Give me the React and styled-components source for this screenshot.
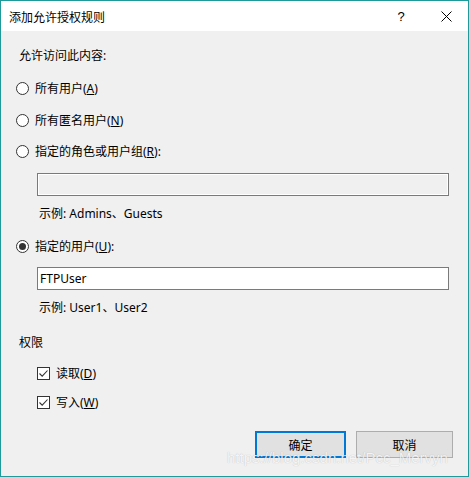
import React from "react";
import styled, { createGlobalStyle } from "styled-components";

const GlobalStyle = createGlobalStyle`
  html, body {
    margin: 0;
    padding: 0;
    background: #f0f0f0;
  }
  body {
    font-family: "Noto Sans", "Noto Sans CJK SC", sans-serif;
    font-size: 12px;
    color: #000;
  }
`;

const Window = styled.div`
  position: relative;
  width: 469px;
  height: 477px;
  box-sizing: border-box;
  border: 1px solid #1f9a9a;
  background: #f0f0f0;
  display: flex;
  flex-direction: column;
  overflow: hidden;
`;

const TitleBar = styled.div`
  height: 30px;
  background: #fff;
  display: flex;
  align-items: center;
  padding-left: 8px;
  padding-right: 16px;
`;

const Title = styled.div`
  flex: 1;
  font-family: "Noto Sans CJK SC", sans-serif;
  font-size: 12px;
  color: #000;
`;

const Help = styled.div`
  width: 12px;
  margin-right: 34px;
  font-family: "Liberation Sans", sans-serif;
  font-size: 13px;
  text-align: center;
`;

const Body = styled.div`
  flex: 1;
  display: flex;
  flex-direction: column;
  padding-left: 15px;
  padding-right: 19px;
`;

const Row = styled.div`
  height: 20px;
  display: flex;
  align-items: center;
  margin-top: ${p => p.$top || 0}px;
  margin-left: ${p => p.$left || 0}px;
  white-space: nowrap;
`;

const Radio = styled.span`
  width: 13px;
  height: 13px;
  box-sizing: border-box;
  border: 1px solid #333;
  border-radius: 50%;
  background: #fff;
  margin-right: 6px;
  display: flex;
  align-items: center;
  justify-content: center;

  &:after {
    content: "";
    width: 7px;
    height: 7px;
    border-radius: 50%;
    background: ${p => (p.$checked ? "#333" : "transparent")};
  }
`;

const Check = styled.span`
  width: 13px;
  height: 13px;
  box-sizing: border-box;
  border: 1px solid #333;
  background: #fff;
  margin-right: 6px;
  display: flex;
  align-items: center;
  justify-content: center;
`;

const Field = styled.div`
  height: 23px;
  margin-left: 21px;
  margin-top: ${p => p.$top}px;
  box-sizing: border-box;
  border: 1px solid #7a7a7a;
  background: ${p => (p.$disabled ? "#f0f0f0" : "#fff")};
  box-shadow: ${p => (p.$disabled ? "inset 0 0 0 1px #fff" : "none")};
  display: flex;
  align-items: center;
  padding-left: 2px;
`;

const Footer = styled.div`
  display: flex;
  justify-content: flex-end;
  gap: 10px;
  margin-top: 19px;
  margin-right: -4px;
`;

const Button = styled.div`
  width: ${p => (p.$primary ? 91 : 97)}px;
  height: 27px;
  box-sizing: border-box;
  border: ${p => (p.$primary ? "2px solid #0078d7" : "1px solid #adadad")};
  background: #e1e1e1;
  display: flex;
  align-items: center;
  justify-content: center;
  font-family: "Noto Sans CJK SC", sans-serif;
`;

// csdn watermark lying over the buttons
const Watermark = styled.div`
  position: absolute;
  left: 226px;
  top: 448px;
  font-family: "Liberation Sans", sans-serif;
  font-size: 15px;
  color: rgba(255, 255, 255, 0.85);
  text-shadow: 0 0 1px rgba(0, 0, 0, 0.25);
  pointer-events: none;
  white-space: nowrap;
`;

const CloseIcon = () => (
  <svg width="11" height="11" viewBox="0 0 11 11">
    <path d="M0.5 0.5 L10.5 10.5 M10.5 0.5 L0.5 10.5" stroke="#000" strokeWidth="1" fill="none" />
  </svg>
);

const Tick = () => (
  <svg width="11" height="11" viewBox="0 0 11 11">
    <path d="M1.5 5.5 L4.2 8.2 L9.5 2.5" stroke="#333" strokeWidth="1.1" fill="none" />
  </svg>
);

const App = () => (
  <>
    <GlobalStyle />
    <Window>
      <TitleBar>
        <Title>添加允许授权规则</Title>
        <Help>?</Help>
        <CloseIcon />
      </TitleBar>
      <Body>
        <Row $top={14} $left={3}>允许访问此内容:</Row>
        <Row $top={13}>
          <Radio />所有用户(<u>A</u>)
        </Row>
        <Row $top={12}>
          <Radio />所有匿名用户(<u>N</u>)
        </Row>
        <Row $top={11}>
          <Radio />指定的角色或用户组(<u>R</u>):
        </Row>
        <Field $top={12} $disabled />
        <Row $top={7} $left={23}>示例: Admins、Guests</Row>
        <Row $top={13}>
          <Radio $checked />指定的用户(<u>U</u>):
        </Row>
        <Field $top={11}>FTPUser</Field>
        <Row $top={7} $left={23}>示例: User1、User2</Row>
        <Row $top={15} $left={3}>权限</Row>
        <Row $top={11} $left={21}>
          <Check><Tick /></Check>读取(<u>D</u>)
        </Row>
        <Row $top={9} $left={21}>
          <Check><Tick /></Check>写入(<u>W</u>)
        </Row>
        <Footer>
          <Button $primary>确定</Button>
          <Button>取消</Button>
        </Footer>
      </Body>
      <Watermark>https://blog.csdn.net/Pcc_Mervyn</Watermark>
    </Window>
  </>
);

export default App;
